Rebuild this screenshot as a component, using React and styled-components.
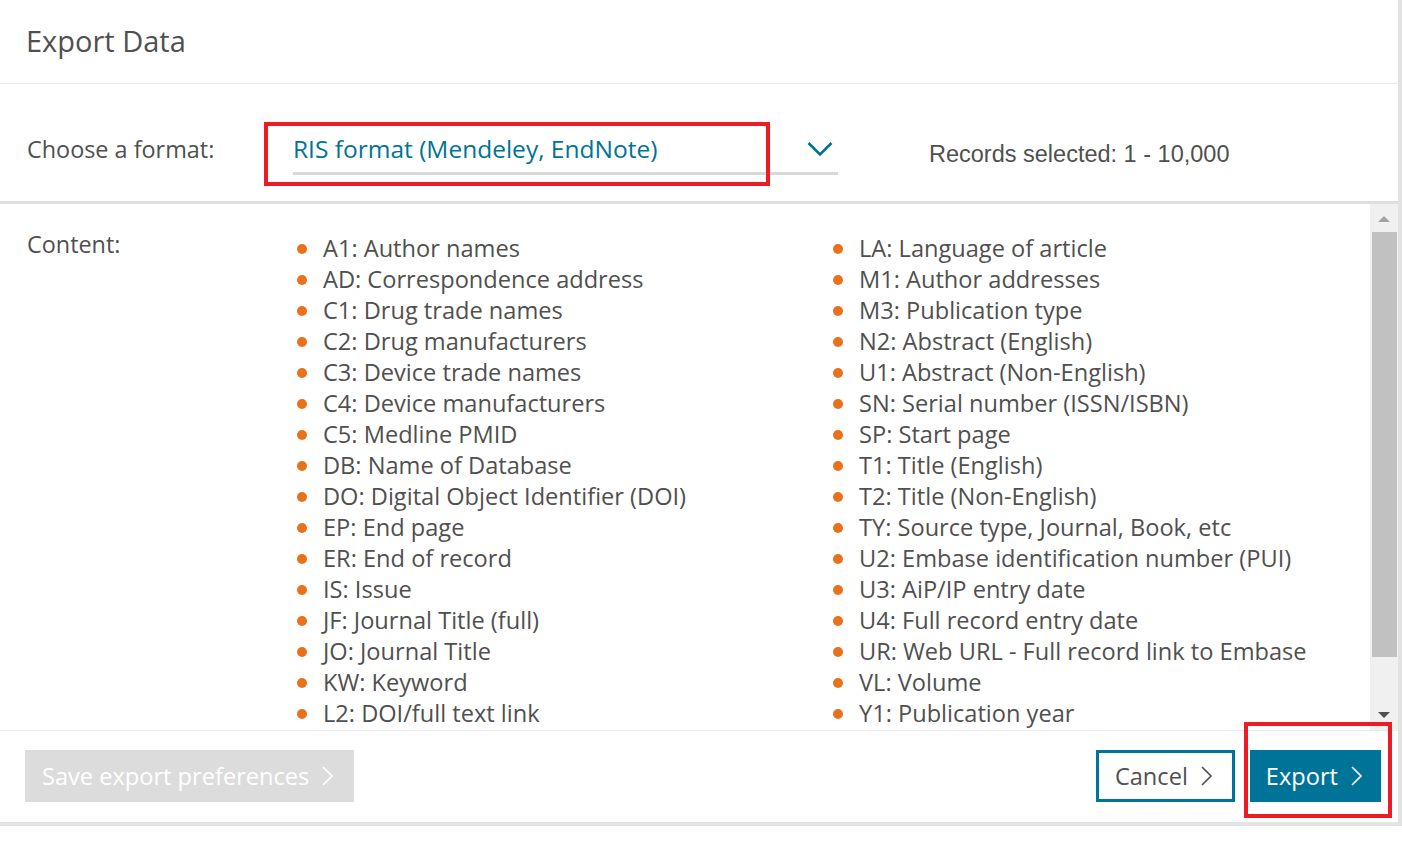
import React from 'react'
import styled, { createGlobalStyle } from 'styled-components'

const GlobalStyle = createGlobalStyle`
  body {
    margin: 0;
    background: #ffffff;
    font-family: "Open Sans", "DejaVu Sans", sans-serif;
    color: #505050;
  }
`

const TEAL = '#007398'

const Page = styled.div`
  position: relative;
  width: 1402px;
  height: 843px;
  display: flex;
  flex-direction: row;
  overflow: hidden;
`

const Column = styled.div`
  width: 1398px;
  display: flex;
  flex-direction: column;
`

const Dialog = styled.div`
  height: 822px;
  background: #ffffff;
  display: flex;
  flex-direction: column;
`

const BottomEdge = styled.div`
  height: 4px;
  background: #e4e4e4;
`

const RightEdge = styled.div`
  width: 4px;
  height: 826px;
  background: #e2e2e2;
`

const Header = styled.div`
  height: 84px;
  border-bottom: 1px solid #e9e9e9;
  display: flex;
  align-items: center;
  padding: 0 26px 2px;
  box-sizing: border-box;
`

const Title = styled.h1`
  margin: 0;
  font-size: 29px;
  font-weight: 400;
  line-height: 40px;
  color: #505050;
`

const FormatRow = styled.div`
  height: 120px;
  box-sizing: border-box;
  padding: 50px 0 0 27px;
  border-bottom: 3px solid #dedede;
  display: flex;
  align-items: flex-start;
`

const Label = styled.div`
  width: ${(p) => p.width || 266}px;
  flex-shrink: 0;
  font-size: 23.4px;
  line-height: ${(p) => p.lh || 31}px;
  color: #505050;
`

const Select = styled.div`
  width: 545px;
  box-sizing: border-box;
  margin-top: -1px;
  padding: 0 5px 8px 0;
  border-bottom: 3px solid #d8d8d8;
  display: flex;
  align-items: center;
  justify-content: space-between;
`

const SelectValue = styled.span`
  font-size: 24.5px;
  line-height: 31px;
  color: ${TEAL};
`

const Records = styled.div`
  margin: 5px 0 0 91px;
  font-family: "Liberation Sans", Arial, sans-serif;
  font-size: 23.5px;
  line-height: 31px;
  color: #505050;
`

const ContentArea = styled.div`
  height: 526px;
  display: flex;
  flex-direction: row;
`

const ContentMain = styled.div`
  flex: 1;
  overflow: hidden;
  padding: 29px 0 0 27px;
  display: grid;
  grid-template-columns: 270px 536px 536px;
  align-items: start;
`

const List = styled.ul`
  list-style: none;
  margin: 0;
  padding: 0;
`

const Item = styled.li`
  display: flex;
  align-items: center;
  gap: 16px;
  font-size: 23.6px;
  line-height: 31px;
  white-space: nowrap;
  color: #505050;

  &::before {
    content: '';
    width: 10px;
    height: 10px;
    border-radius: 50%;
    background: #e9711c;
    flex-shrink: 0;
  }
`

const Scrollbar = styled.div`
  width: 28px;
  background: #f0f0f0;
  display: flex;
  flex-direction: column;
  align-items: center;
`

const Arrow = styled.div`
  width: 0;
  height: 0;
  border-left: 6px solid transparent;
  border-right: 6px solid transparent;
  ${(p) =>
    p.down
      ? `border-top: 6px solid #505050; margin-top: 7px;`
      : `border-bottom: 6px solid #a3a3a3; margin-top: 12px;`}
`

const Thumb = styled.div`
  width: 25px;
  height: 425px;
  margin: 10px 0 0 1px;
  background: #c1c1c1;
`

const Spacer = styled.div`
  flex: ${(p) => (p.size ? `0 0 ${p.size}px` : '1')};
`

const Footer = styled.div`
  flex: 1;
  border-top: 1px solid #ececec;
  padding: 19px 17px 0 25px;
  display: flex;
  align-items: flex-start;
  gap: 15px;
`

const Button = styled.button`
  height: 52px;
  box-sizing: border-box;
  display: flex;
  align-items: center;
  gap: 13px;
  font-family: "Open Sans", sans-serif;
  font-size: 23.6px;
  cursor: pointer;
  padding: 0 ${(p) => p.padR}px 0 ${(p) => p.padL}px;
  border: ${(p) => (p.variant === 'outline' ? `3px solid ${TEAL}` : 'none')};
  background: ${(p) =>
    p.variant === 'primary' ? TEAL : p.variant === 'disabled' ? '#dcdcdc' : '#ffffff'};
  color: ${(p) => (p.variant === 'outline' ? '#505050' : '#ffffff')};
  margin-left: ${(p) => (p.pushRight ? 'auto' : '0')};
`

const Annotation = styled.div`
  position: absolute;
  left: ${(p) => p.x}px;
  top: ${(p) => p.y}px;
  width: ${(p) => p.w}px;
  height: ${(p) => p.h}px;
  box-sizing: border-box;
  border: 4.5px solid #ed1c24;
  pointer-events: none;
`

const Chevron = ({ color }) => (
  <svg width="11" height="20" viewBox="0 0 11 20" fill="none">
    <polyline points="1,1 10,10 1,19" stroke={color} strokeWidth="1.6" />
  </svg>
)

const DownChevron = () => (
  <svg width="26" height="16" viewBox="0 0 26 16" fill="none">
    <polyline points="1.5,2 13,13.5 24.5,2" stroke={TEAL} strokeWidth="2.6" />
  </svg>
)

const left = [
  'A1: Author names',
  'AD: Correspondence address',
  'C1: Drug trade names',
  'C2: Drug manufacturers',
  'C3: Device trade names',
  'C4: Device manufacturers',
  'C5: Medline PMID',
  'DB: Name of Database',
  'DO: Digital Object Identifier (DOI)',
  'EP: End page',
  'ER: End of record',
  'IS: Issue',
  'JF: Journal Title (full)',
  'JO: Journal Title',
  'KW: Keyword',
  'L2: DOI/full text link',
]

const right = [
  'LA: Language of article',
  'M1: Author addresses',
  'M3: Publication type',
  'N2: Abstract (English)',
  'U1: Abstract (Non-English)',
  'SN: Serial number (ISSN/ISBN)',
  'SP: Start page',
  'T1: Title (English)',
  'T2: Title (Non-English)',
  'TY: Source type, Journal, Book, etc',
  'U2: Embase identification number (PUI)',
  'U3: AiP/IP entry date',
  'U4: Full record entry date',
  'UR: Web URL - Full record link to Embase',
  'VL: Volume',
  'Y1: Publication year',
]

export default function App() {
  return (
    <Page>
      <GlobalStyle />
      <Column>
        <Dialog>
          <Header>
            <Title>Export Data</Title>
          </Header>
          <FormatRow>
            <Label>Choose a format:</Label>
            <Select>
              <SelectValue>RIS format (Mendeley, EndNote)</SelectValue>
              <DownChevron />
            </Select>
            <Records>Records selected: 1 - 10,000</Records>
          </FormatRow>
          <ContentArea>
            <ContentMain>
              <Label width={270} lh={23}>Content:</Label>
              <List>
                {left.map((t) => (
                  <Item key={t}>{t}</Item>
                ))}
              </List>
              <List>
                {right.map((t) => (
                  <Item key={t}>{t}</Item>
                ))}
              </List>
            </ContentMain>
            <Scrollbar>
              <Arrow />
              <Thumb />
              <Spacer />
              <Arrow down />
              <Spacer size={12} />
            </Scrollbar>
          </ContentArea>
          <Footer>
            <Button variant="disabled" padL={17} padR={21}>
              Save export preferences
              <Chevron color="#ffffff" />
            </Button>
            <Button variant="outline" pushRight padL={16} padR={20}>
              Cancel
              <Chevron color="#505050" />
            </Button>
            <Button variant="primary" padL={16} padR={19}>
              Export
              <Chevron color="#ffffff" />
            </Button>
          </Footer>
        </Dialog>
        <BottomEdge />
      </Column>
      <RightEdge />
      <Annotation x={264} y={122} w={506} h={64} />
      <Annotation x={1244} y={722} w={148} h={96} />
    </Page>
  )
}
